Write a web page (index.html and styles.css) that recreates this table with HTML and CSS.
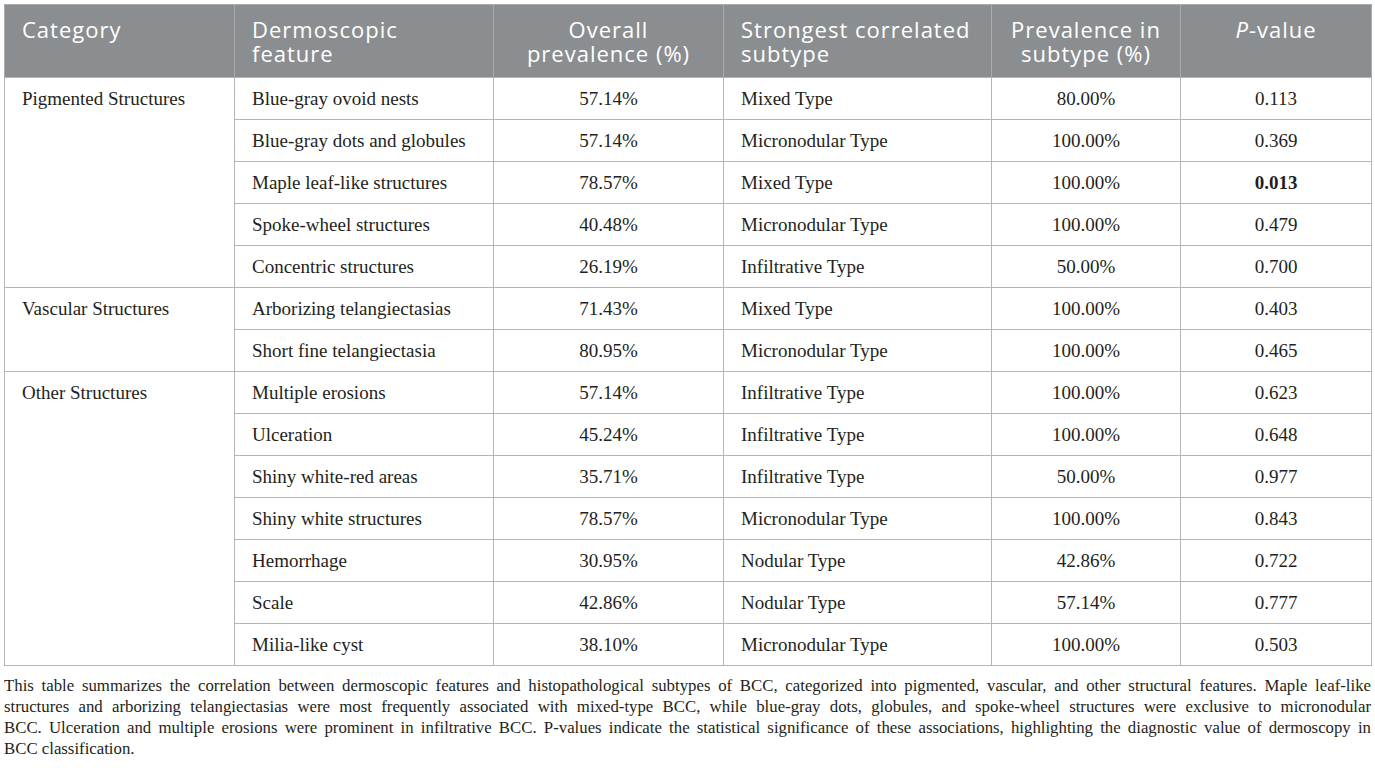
FILE: index.html
```html
<!DOCTYPE html>
<html lang="en">
<head>
    <meta charset="UTF-8">
    <title>Dermoscopic features by BCC subtype</title>
    <link rel="stylesheet" href="styles.css">
</head>
<body>
    <div class="wrap">
        <table class="data-table">
            <colgroup>
                <col class="col-cat">
                <col class="col-feat">
                <col class="col-overall">
                <col class="col-subtype">
                <col class="col-prev">
                <col class="col-p">
            </colgroup>
            <thead>
                <tr>
                    <th>Category</th>
                    <th>Dermoscopic feature</th>
                    <th class="c">Overall prevalence (%)</th>
                    <th>Strongest correlated subtype</th>
                    <th class="c">Prevalence in subtype (%)</th>
                    <th class="c"><i>P</i>-value</th>
                </tr>
            </thead>
            <tbody>
                <tr>
                    <td rowspan="5" class="cat">Pigmented Structures</td>
                    <td>Blue-gray ovoid nests</td>
                    <td class="c">57.14%</td>
                    <td>Mixed Type</td>
                    <td class="c">80.00%</td>
                    <td class="c">0.113</td>
                </tr>
                <tr>
                    <td>Blue-gray dots and globules</td>
                    <td class="c">57.14%</td>
                    <td>Micronodular Type</td>
                    <td class="c">100.00%</td>
                    <td class="c">0.369</td>
                </tr>
                <tr>
                    <td>Maple leaf-like structures</td>
                    <td class="c">78.57%</td>
                    <td>Mixed Type</td>
                    <td class="c">100.00%</td>
                    <td class="c"><b>0.013</b></td>
                </tr>
                <tr>
                    <td>Spoke-wheel structures</td>
                    <td class="c">40.48%</td>
                    <td>Micronodular Type</td>
                    <td class="c">100.00%</td>
                    <td class="c">0.479</td>
                </tr>
                <tr>
                    <td>Concentric structures</td>
                    <td class="c">26.19%</td>
                    <td>Infiltrative Type</td>
                    <td class="c">50.00%</td>
                    <td class="c">0.700</td>
                </tr>
                <tr>
                    <td rowspan="2" class="cat">Vascular Structures</td>
                    <td>Arborizing telangiectasias</td>
                    <td class="c">71.43%</td>
                    <td>Mixed Type</td>
                    <td class="c">100.00%</td>
                    <td class="c">0.403</td>
                </tr>
                <tr>
                    <td>Short fine telangiectasia</td>
                    <td class="c">80.95%</td>
                    <td>Micronodular Type</td>
                    <td class="c">100.00%</td>
                    <td class="c">0.465</td>
                </tr>
                <tr>
                    <td rowspan="7" class="cat">Other Structures</td>
                    <td>Multiple erosions</td>
                    <td class="c">57.14%</td>
                    <td>Infiltrative Type</td>
                    <td class="c">100.00%</td>
                    <td class="c">0.623</td>
                </tr>
                <tr>
                    <td>Ulceration</td>
                    <td class="c">45.24%</td>
                    <td>Infiltrative Type</td>
                    <td class="c">100.00%</td>
                    <td class="c">0.648</td>
                </tr>
                <tr>
                    <td>Shiny white-red areas</td>
                    <td class="c">35.71%</td>
                    <td>Infiltrative Type</td>
                    <td class="c">50.00%</td>
                    <td class="c">0.977</td>
                </tr>
                <tr>
                    <td>Shiny white structures</td>
                    <td class="c">78.57%</td>
                    <td>Micronodular Type</td>
                    <td class="c">100.00%</td>
                    <td class="c">0.843</td>
                </tr>
                <tr>
                    <td>Hemorrhage</td>
                    <td class="c">30.95%</td>
                    <td>Nodular Type</td>
                    <td class="c">42.86%</td>
                    <td class="c">0.722</td>
                </tr>
                <tr>
                    <td>Scale</td>
                    <td class="c">42.86%</td>
                    <td>Nodular Type</td>
                    <td class="c">57.14%</td>
                    <td class="c">0.777</td>
                </tr>
                <tr>
                    <td>Milia-like cyst</td>
                    <td class="c">38.10%</td>
                    <td>Micronodular Type</td>
                    <td class="c">100.00%</td>
                    <td class="c">0.503</td>
                </tr>
            </tbody>
        </table>

        <p class="caption">
            <span class="line">This table summarizes the correlation between dermoscopic features and histopathological subtypes of BCC, categorized into pigmented, vascular, and other structural features. Maple leaf-like</span>
            <span class="line">structures and arborizing telangiectasias were most frequently associated with mixed-type BCC, while blue-gray dots, globules, and spoke-wheel structures were exclusive to micronodular</span>
            <span class="line">BCC. Ulceration and multiple erosions were prominent in infiltrative BCC. P-values indicate the statistical significance of these associations, highlighting the diagnostic value of dermoscopy in</span>
            <span class="line last">BCC classification.</span>
        </p>
    </div>
</body>
</html>
```

FILE: styles.css
```css
body {
    margin: 0;
    background-color: #fff;
    color: #231f20;
    font-family: 'Liberation Serif', 'Times New Roman', serif;
}

.wrap {
    padding: 4px 4px 0 4px;
}

.data-table {
    width: 1367px;
    border-collapse: collapse;
    table-layout: fixed;
    border: 1px solid #a9abad;
}

.col-cat { width: 230px; }
.col-feat { width: 259px; }
.col-overall { width: 230px; }
.col-subtype { width: 268px; }
.col-prev { width: 189px; }
.col-p { width: 191px; }

.data-table th {
    background-color: #8b8e90;
    color: #fff;
    font-family: 'Open Sans', 'Noto Sans', sans-serif;
    font-weight: 400;
    font-size: 22px;
    letter-spacing: 1px;
    line-height: 24px;
    text-align: left;
    vertical-align: top;
    padding: 12px 17px 12px 17px;
    height: 48px;
    border-left: 1px solid #a9abad;
}

.data-table th.c {
    text-align: center;
}

.data-table td {
    font-size: 19px;
    line-height: 22px;
    height: 41px;
    padding: 0 17px;
    border: 1px solid #b4b5b7;
    vertical-align: middle;
}

.data-table td.cat {
    vertical-align: top;
    padding-top: 10px;
}

.data-table .c {
    text-align: center;
}

.caption {
    margin: 9px 0 0 0;
    font-size: 16.8px;
    line-height: 21px;
    color: #231f20;
}

.caption .line {
    display: block;
    white-space: nowrap;
    text-align: justify;
    text-align-last: justify;
}

.caption .line.last {
    text-align-last: left;
}
```
